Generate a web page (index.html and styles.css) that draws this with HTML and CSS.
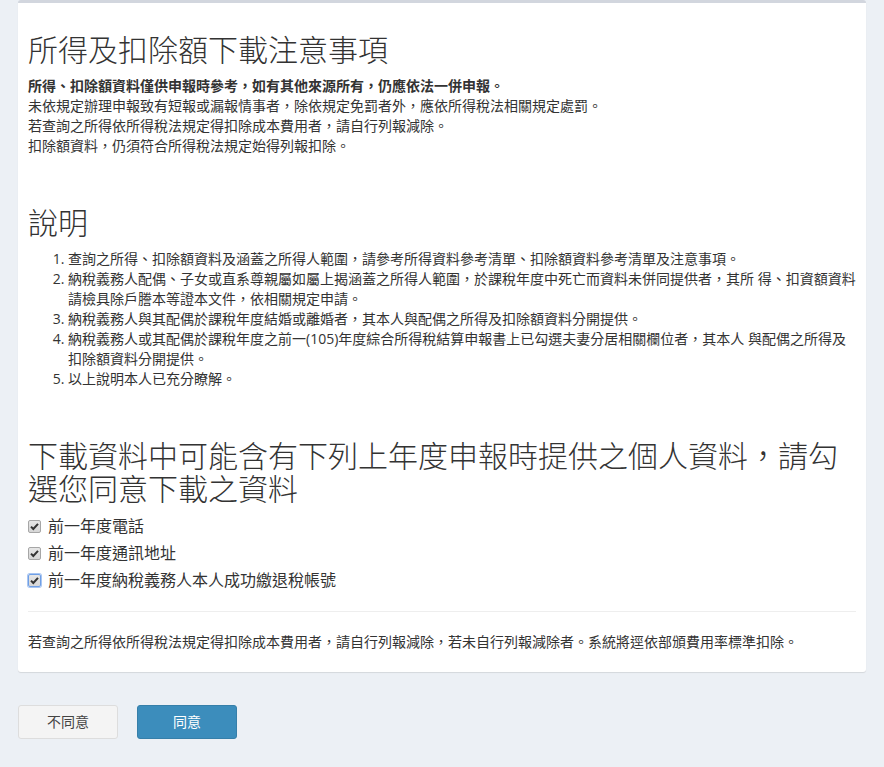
FILE: index.html
```html
<!DOCTYPE html>
<html lang="zh-Hant">
<head>
<meta charset="utf-8">
<title>所得及扣除額下載注意事項</title>
<link rel="stylesheet" href="styles.css">
</head>
<body>
<div class="wrapper">
  <div class="box">
    <div class="box-body">
      <h2 class="title">所得及扣除額下載注意事項</h2>
      <p class="notice"><strong>所得、扣除額資料僅供申報時參考，如有其他來源所有，仍應依法一併申報。</strong><br>未依規定辦理申報致有短報或漏報情事者，除依規定免罰者外，應依所得稅法相關規定處罰。<br>若查詢之所得依所得稅法規定得扣除成本費用者，請自行列報減除。<br>扣除額資料，仍須符合所得稅法規定始得列報扣除。</p>

      <h2 class="title spaced">說明</h2>
      <ol class="notes">
        <li>查詢之所得、扣除額資料及涵蓋之所得人範圍，請參考所得資料參考清單、扣除額資料參考清單及注意事項。</li>
        <li>納稅義務人配偶、子女或直系尊親屬如屬上揭涵蓋之所得人範圍，於課稅年度中死亡而資料未併同提供者，其所 得、扣資額資料請檢具除戶謄本等證本文件，依相關規定申請。</li>
        <li>納稅義務人與其配偶於課稅年度結婚或離婚者，其本人與配偶之所得及扣除額資料分開提供。</li>
        <li>納稅義務人或其配偶於課稅年度之前一(105)年度綜合所得稅結算申報書上已勾選夫妻分居相關欄位者，其本人 與配偶之所得及扣除額資料分開提供。</li>
        <li>以上說明本人已充分瞭解。</li>
      </ol>

      <h2 class="title spaced">下載資料中可能含有下列上年度申報時提供之個人資料，請勾選您同意下載之資料</h2>
      <div class="checks">
        <label class="check"><span class="cb"><svg viewBox="0 0 13 13" width="13" height="13"><path d="M3 6.6 L5.3 9 L10 3.8" fill="none" stroke="#333" stroke-width="2"/></svg></span>前一年度電話</label>
        <label class="check"><span class="cb"><svg viewBox="0 0 13 13" width="13" height="13"><path d="M3 6.6 L5.3 9 L10 3.8" fill="none" stroke="#333" stroke-width="2"/></svg></span>前一年度通訊地址</label>
        <label class="check"><span class="cb cb-focus"><svg viewBox="0 0 13 13" width="13" height="13"><path d="M3 6.6 L5.3 9 L10 3.8" fill="none" stroke="#333" stroke-width="2"/></svg></span>前一年度納稅義務人本人成功繳退稅帳號</label>
      </div>
      <hr class="divider">
      <p class="footnote">若查詢之所得依所得稅法規定得扣除成本費用者，請自行列報減除，若未自行列報減除者。系統將逕依部頒費用率標準扣除。</p>
    </div>
  </div>
  <div class="actions">
    <button class="btn btn-default" type="button">不同意</button>
    <button class="btn btn-primary" type="button">同意</button>
  </div>
</div>
</body>
</html>
```
FILE: styles.css
```css
html, body {
  margin: 0;
  padding: 0;
}
body {
  background: #ecf0f5;
  color: #333;
  font-family: "Open Sans", "Noto Sans CJK TC", sans-serif;
  font-size: 14px;
  line-height: 20px;
}
.wrapper {
  padding: 0 18px;
}
.box {
  background: #fff;
  border-top: 3px solid #d2d6de;
  border-radius: 3px;
  box-shadow: 0 1px 1px rgba(0, 0, 0, 0.1);
}
.box-body {
  padding: 10px;
}
.box-body::after {
  content: "";
  display: table;
}
.title {
  font-size: 30px;
  font-weight: 300;
  line-height: 33px;
  margin: 20px 0 10px;
  color: #333;
}
.title.spaced {
  margin-top: 50px;
}
.notice {
  margin: 0 0 10px;
}
.notice strong {
  font-weight: 700;
}
.notes {
  margin: 0 -2px 10px 0;
  padding-left: 40px;
}
.checks {
  margin: 10px 0 10px;
  display: flex;
  flex-direction: column;
  gap: 5px;
}
.check {
  display: flex;
  align-items: center;
  font-size: 16px;
  line-height: 22px;
  height: 22px;
}
.cb {
  width: 11px;
  height: 11px;
  border: 1px solid #a6a6a6;
  border-radius: 2px;
  background: linear-gradient(#e6e6e6, #d6d6d6);
  margin-right: 7px;
  display: flex;
  align-items: center;
  justify-content: center;
  overflow: hidden;
}
.cb svg {
  flex: none;
}
.cb-focus {
  border-color: #6f9fe6;
  box-shadow: 0 0 0 1px #a9c6f2;
}
.divider {
  margin: 20px 0;
  border: 0;
  border-top: 1px solid #eee;
}
.footnote {
  margin: 0 0 10px;
}
.actions {
  display: flex;
  gap: 19px;
  padding: 33px 0 0;
}
.btn {
  width: 100px;
  height: 34px;
  padding: 6px 12px;
  font-family: "Open Sans", "Noto Sans CJK TC", sans-serif;
  font-size: 14px;
  line-height: 20px;
  border: 1px solid transparent;
  border-radius: 3px;
  cursor: pointer;
}
.btn-default {
  background: #f4f4f4;
  color: #444;
  border-color: #ddd;
}
.btn-primary {
  background: #3c8dbc;
  color: #fff;
  border-color: #367fa9;
}
```
